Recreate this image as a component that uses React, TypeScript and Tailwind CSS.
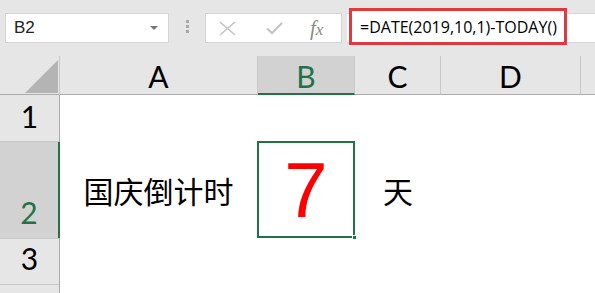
import React from "react";

const font = { fontFamily: "Lato, 'Noto Sans', 'Noto Sans CJK SC', sans-serif" };

function Header({ label, w, selected }: { label: string; w: number | string; selected?: boolean }) {
  return (
    <div
      className={`h-full flex items-center justify-center border-r border-[#c8c8c8] text-[30px] leading-none pt-[2px] ${
        selected ? "bg-[#d2d2d2] text-[#217346] border-b-2 border-b-[#217346]" : "text-black border-b border-b-[#ababab]"
      }`}
      style={{ width: w }}
    >
      {label}
    </div>
  );
}

export default function App() {
  return (
    <div className="w-[595px] h-[293px] overflow-hidden bg-white" style={font}>
      {/* toolbar */}
      <div className="h-[56px] bg-[#e6e6e6] flex items-start relative">
        <div className="mt-[13px] ml-[5px] w-[164px] h-[30px] bg-white border border-[#d4d4d4] flex items-center justify-between pl-[8px] pr-[10px]">
          <span className="text-[17px] text-[#222]" style={{ fontFamily: "'Liberation Sans', sans-serif" }}>B2</span>
          <svg width="8" height="5" viewBox="0 0 8 5"><polygon points="0,0 8,0 4,4" fill="#777" /></svg>
        </div>
        <div className="mt-[20px] ml-[17px] flex flex-col gap-[2px]">
          <div className="w-[3px] h-[3px] bg-[#a8a8a8]" />
          <div className="w-[3px] h-[3px] bg-[#a8a8a8]" />
          <div className="w-[3px] h-[3px] bg-[#a8a8a8]" />
        </div>
        <div className="mt-[13px] ml-[16px] w-[137px] h-[30px] bg-white border border-[#d4d4d4] flex items-center">
          <svg className="ml-[13px]" width="17" height="15" viewBox="0 0 17 15">
            <path d="M1 1 L16 14 M16 1 L1 14" stroke="#c4c4c4" strokeWidth="1.6" />
          </svg>
          <svg className="ml-[30px]" width="17" height="14" viewBox="0 0 17 14">
            <path d="M1 7.5 L6 12 L16 2" stroke="#c4c4c4" strokeWidth="2.2" fill="none" />
          </svg>
          <span
            className="ml-[27px] text-[21px] italic text-[#8a8a8a] leading-none"
            style={{ fontFamily: "'Liberation Serif', serif" }}
          >
            <i>f</i><span className="text-[17px]">x</span>
          </span>
        </div>
        <div className="mt-[13px] ml-[5px] flex-1 h-[30px] bg-white border-y border-[#d4d4d4]" />
        <div className="absolute left-[349px] top-[8px] w-[218px] h-[37px] border-[3px] border-[#e0393e] bg-white flex items-center pl-[8px]">
          <span className="text-[16px] text-black" style={{ fontFamily: "'Open Sans', Lato, sans-serif" }}>
            =DATE(2019,10,1)-TODAY()
          </span>
        </div>
      </div>

      {/* column headers */}
      <div className="h-[39px] bg-[#e6e6e6] flex">
        <div className="w-[60px] h-full border-r border-[#c8c8c8] border-b border-b-[#ababab] relative">
          <svg className="absolute left-[25px] top-[4px]" width="33" height="33" viewBox="0 0 33 33">
            <polygon points="33,0 33,33 0,33" fill="#b4b4b4" />
          </svg>
        </div>
        <Header label="A" w={198} />
        <Header label="B" w={97} selected />
        <Header label="C" w={86} />
        <Header label="D" w={140} />
        <div className="flex-1 h-full border-b border-b-[#ababab]" />
      </div>

      {/* rows */}
      <div className="flex">
        <div className="w-[60px] flex flex-col bg-[#e6e6e6] border-r border-[#ababab] text-[30px] leading-none">
          <div className="h-[47px] flex items-end justify-center pb-[10px] border-b border-[#c8c8c8]">1</div>
          <div className="h-[96px] flex items-end justify-center pb-[11px] bg-[#d2d2d2] text-[#217346] border-r-2 border-r-[#217346] -mr-px">
            2
          </div>
          <div className="h-[47px] flex items-end justify-center pb-[11px] border-y border-[#c8c8c8]">3</div>
          <div className="h-[20px]" />
        </div>
        <div className="flex-1 flex flex-col">
          <div className="h-[47px]" />
          <div className="h-[96px] flex">
            <div
              className="w-[197px] flex items-center justify-center text-[30px] text-black"
              style={{ fontFamily: "'Noto Sans CJK SC', sans-serif" }}
            >
              国庆倒计时
            </div>
            <div className="w-[98px] h-[97px] -mt-px border-2 border-[#217346] relative flex items-center justify-center">
              <span className="text-[78px] text-[#ff0000] leading-none" style={{ fontFamily: "'Liberation Sans', sans-serif" }}>
                7
              </span>
              <div className="absolute right-[-4px] bottom-[-4px] w-[5px] h-[5px] bg-[#217346] border border-white" />
            </div>
            <div
              className="w-[86px] flex items-center justify-center text-[30px] text-black"
              style={{ fontFamily: "'Noto Sans CJK SC', sans-serif" }}
            >
              天
            </div>
          </div>
        </div>
      </div>
    </div>
  );
}
